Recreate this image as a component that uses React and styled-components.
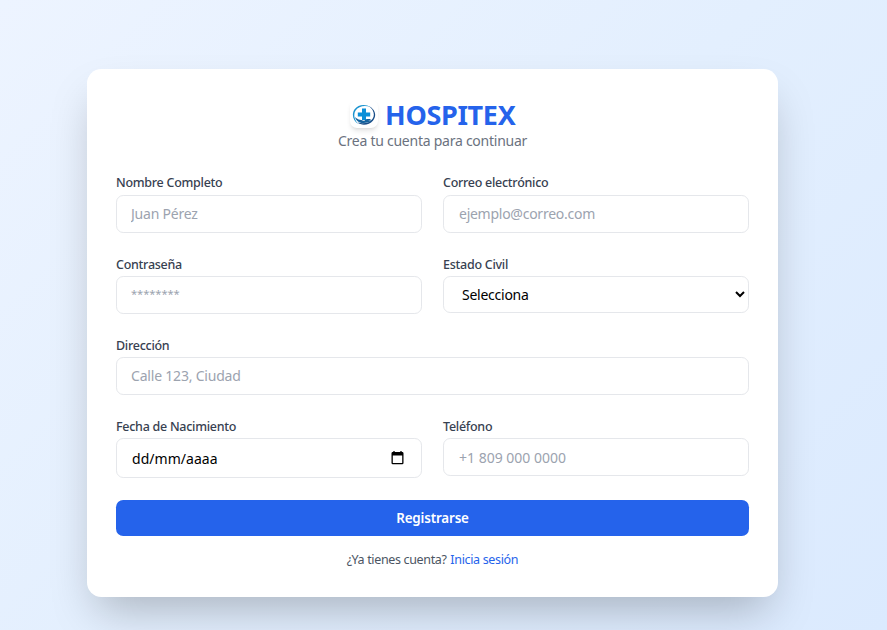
import React from 'react';
import styled, { createGlobalStyle } from 'styled-components';

const GlobalStyle = createGlobalStyle`
  *, *::before, *::after { box-sizing: border-box; }
  body {
    margin: 0;
    overflow: hidden;
    font-family: "Segoe UI", "Noto Sans", "Open Sans", sans-serif;
  }
`;

const Page = styled.main`
  height: 630px;
  padding: 69px 0 0 87px;
  overflow: hidden;
  background: linear-gradient(135deg, #edf4ff 0%, #e3effe 50%, #dbeafe 100%);
`;

const Card = styled.section`
  width: 691px;
  height: 528px;
  padding: 29px;
  border-radius: 14.4px;
  background: #fff;
  box-shadow: 0 22.5px 45px -10.8px rgba(0, 0, 0, 0.25);
`;

const Header = styled.header`
  display: flex;
  flex-direction: column;
  align-items: center;
  height: 75px;
`;

const Brand = styled.div`
  display: flex;
  align-items: center;
  gap: 7.5px;
  height: 33px;
`;

const LogoTile = styled.span`
  display: flex;
  align-items: center;
  justify-content: center;
  width: 28px;
  height: 28px;
  padding-top: 2px;
  margin-bottom: 1px;
  border-radius: 7px;
  background: #fff;
  box-shadow: 0 3.6px 5.4px -1px rgba(0, 0, 0, 0.1), 0 1.8px 3.6px -2px rgba(0, 0, 0, 0.1);
`;

const Title = styled.h1`
  margin: 1px 0 0;
  font-size: 27px;
  line-height: 32px;
  font-weight: 700;
  letter-spacing: -0.32px;
  color: #2563eb;
`;

const Subtitle = styled.p`
  margin: 0;
  font-size: 14px;
  line-height: 20px;
  letter-spacing: -0.25px;
  color: #6b7280;
`;

const Form = styled.form`
  display: grid;
  grid-template-columns: 306px 306px;
  column-gap: 21px;
  grid-template-rows: 81px 81px 81px 84px 36px;
`;

const Field = styled.label`
  display: flex;
  flex-direction: column;
  grid-column: ${({ $wide }) => ($wide ? '1 / -1' : 'auto')};
`;

const Label = styled.span`
  height: 18px;
  padding-top: ${({ $first }) => ($first ? 1 : 2)}px;
  font-size: 12.5px;
  line-height: 18px;
  font-weight: 500;
  letter-spacing: -0.27px;
  color: #374151;
  white-space: nowrap;
`;

const controlBox = `
  width: 100%;
  margin: 4px 0 0;
  border: 1px solid #e5e7eb;
  border-radius: 7.2px;
  background: #fff;
  font-family: inherit;
  font-size: 14px;
  outline: none;
`;

const Input = styled.input`
  ${controlBox}
  height: 38px;
  padding: 0 14px ${({ $lift }) => $lift || 0}px ${({ $left }) => $left || 14}px;
  letter-spacing: ${({ $track = -0.22 }) => $track}px;
  &::placeholder { color: #9ca3af; opacity: 1; }
`;

const PasswordInput = styled(Input)`
  font-size: 11.2px;
`;

const Select = styled.select`
  ${controlBox}
  height: 37px;
  padding: 0 0 0 14px;
  letter-spacing: -0.25px;
  color: #000;
`;

const DateBox = styled.span`
  ${controlBox}
  display: flex;
  align-items: center;
  justify-content: space-between;
  height: 40px;
  padding: 1px 17px 0 15px;
  letter-spacing: 0.03px;
  color: #000;
  svg { margin-bottom: 2px; }
`;

const Submit = styled.button`
  grid-column: 1 / -1;
  height: 36px;
  padding: 0;
  border: 0;
  border-radius: 7.2px;
  background: #2563eb;
  color: #fff;
  font-family: inherit;
  font-size: 13.4px;
  font-weight: 600;
  letter-spacing: -0.15px;
`;

const Footer = styled.p`
  margin: 14px 0 0;
  font-size: 12.5px;
  line-height: 19px;
  letter-spacing: -0.34px;
  text-align: center;
  color: #4b5563;
`;

const Link = styled.a`
  margin-left: 0.8px;
  color: #2563eb;
  text-decoration: none;
`;

const Logo = () => (
  <svg width="24" height="22" viewBox="0 0 24 22" fill="none">
    <path d="M18.6 3C13.6-.4 6 .3 2.6 5.2-.8 10.2 1 17 6.3 20 2.4 16.1 1 10.7 3.6 6.6 6.5 2 12.7.9 18.6 3Z" fill="#1b93cf" />
    <path d="M16.4 1.9c6.8 2.7 8.8 9.8 4.5 14.9-3.8 4.4-11 5.3-15.5 1.8 6.1 1.7 12.4.5 15.2-3.8 2.7-4.3.9-9.9-4.2-12.9Z" fill="#174c87" />
    <path d="M10 4.6h4v4h4.2v4H14V16h-4v-3.4H5.8v-4H10z" fill="#0b8fd8" />
    <path d="M2.9 13c1.6 1.7 3.1 2.4 5.1 2.7 1.9.2 2.7 1.2 4.5 1 .7-1.2 1.9-1.8 3.2-1.8h3.2c-.6 1-1.7 1.5-3.2 1.8l4-.4c-2.6 2.6-8.4 3.5-12 2.1C5.3 17.5 3.6 15.7 2.9 13Z" fill="#14639f" />
  </svg>
);

const CalendarIcon = () => (
  <svg width="13" height="14" viewBox="0 0 13 14" fill="none">
    <path d="M3 0v2M10 0v2" stroke="#000" strokeWidth="1.3" />
    <rect x="1.15" y="1.65" width="10.7" height="11" rx=".7" stroke="#000" strokeWidth="1.3" />
    <path d="M1 1.5h11v3H1z" fill="#000" />
  </svg>
);

export default function App() {
  return (
    <>
      <GlobalStyle />
      <Page>
        <Card>
          <Header>
            <Brand>
              <LogoTile><Logo /></LogoTile>
              <Title>HOSPITEX</Title>
            </Brand>
            <Subtitle>Crea tu cuenta para continuar</Subtitle>
          </Header>
          <Form onSubmit={(event) => event.preventDefault()}>
            <Field>
              <Label $first>Nombre Completo</Label>
              <Input type="text" placeholder="Juan Pérez" $lift={2} />
            </Field>
            <Field>
              <Label $first>Correo electrónico</Label>
              <Input type="email" placeholder="ejemplo@correo.com" $left={15} $lift={2} $track={-0.26} />
            </Field>
            <Field>
              <Label>Contraseña</Label>
              <PasswordInput type="password" placeholder="********" $lift={3} $track={-0.08} />
            </Field>
            <Field>
              <Label>Estado Civil</Label>
              <Select defaultValue="">
                <option value="">Selecciona</option>
                <option>Soltero</option>
                <option>Casado</option>
              </Select>
            </Field>
            <Field $wide>
              <Label>Dirección</Label>
              <Input type="text" placeholder="Calle 123, Ciudad" $lift={2} $track={-0.2} />
            </Field>
            <Field as="div">
              <Label>Fecha de Nacimiento</Label>
              <DateBox>dd/mm/aaaa<CalendarIcon /></DateBox>
            </Field>
            <Field>
              <Label>Teléfono</Label>
              <Input type="tel" placeholder="+1 809 000 0000" $left={15} $track={0} />
            </Field>
            <Submit type="submit">Registrarse</Submit>
          </Form>
          <Footer>¿Ya tienes cuenta? <Link href="#">Inicia sesión</Link></Footer>
        </Card>
      </Page>
    </>
  );
}
